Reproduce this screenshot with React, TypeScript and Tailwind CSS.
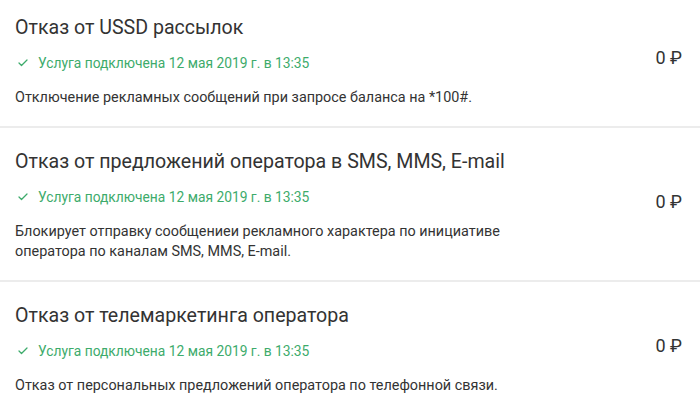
import { Check } from 'lucide-react'

interface ServiceItem {
  title: string
  status: string
  description: string
  price: string
}

const services: ServiceItem[] = [
  {
    title: 'Отказ от USSD рассылок',
    status: 'Услуга подключена 12 мая 2019 г. в 13:35',
    description: 'Отключение рекламных сообщений при запросе баланса на *100#.',
    price: '0 ₽',
  },
  {
    title: 'Отказ от предложений оператора в SMS, MMS, E-mail',
    status: 'Услуга подключена 12 мая 2019 г. в 13:35',
    description:
      'Блокирует отправку сообщениеи рекламного характера по инициативе\nоператора по каналам SMS, MMS, E-mail.',
    price: '0 ₽',
  },
  {
    title: 'Отказ от телемаркетинга оператора',
    status: 'Услуга подключена 12 мая 2019 г. в 13:35',
    description: 'Отказ от персональных предложений оператора по телефонной связи.',
    price: '0 ₽',
  },
]

const ServiceRow = ({ item }: { item: ServiceItem }) => (
  <div className="flex items-center justify-between border-b-2 border-[#ececec] pl-[15px] pr-[18px] pt-[22px] pb-[18px] last:border-b-0">
    <div className="flex flex-col">
      <h3 className="text-[19.6px] leading-[24px] text-[#333]">{item.title}</h3>
      <div className="mt-[13px] flex items-center gap-[9px] pl-[2px] text-[13.8px] leading-[20px] text-[#3dab6b]">
        <Check className="h-[12px] w-[12px]" strokeWidth={2.5} />
        <span>{item.status}</span>
      </div>
      <p className="mt-[15px] whitespace-pre-line text-[14.4px] leading-[20px] text-[#333]">
        {item.description}
      </p>
    </div>
    <div className="-mt-[9px] text-[18px] text-[#333]">{item.price}</div>
  </div>
)

export default function App() {
  return (
    <div
      className="h-[407px] w-[700px] overflow-hidden bg-white"
      style={{ fontFamily: 'Roboto, "Noto Sans", sans-serif' }}
    >
      <div className="-mt-[6px]">
        {services.map((s, i) => (
          <ServiceRow key={i} item={s} />
        ))}
      </div>
    </div>
  )
}
